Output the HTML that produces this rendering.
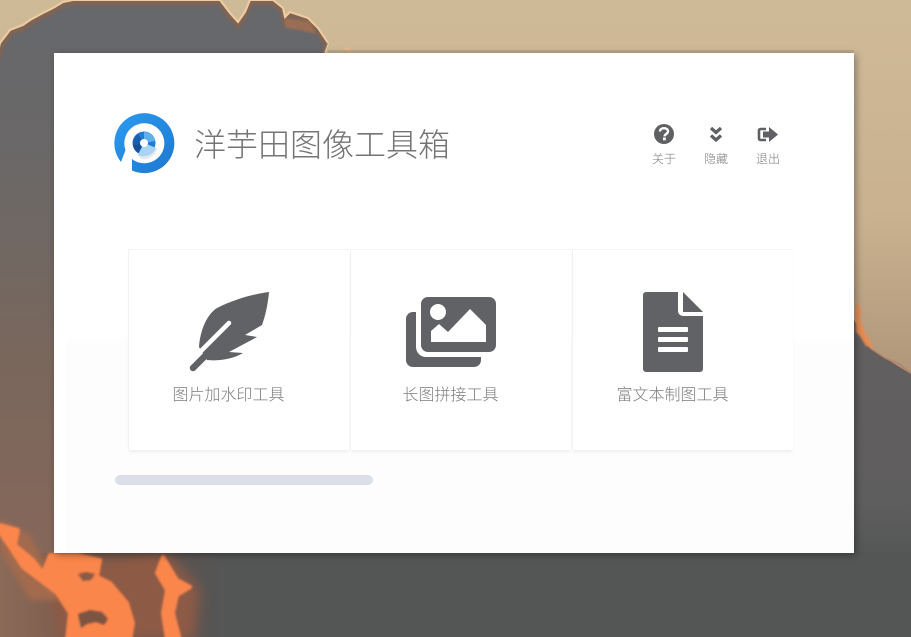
<!DOCTYPE html>
<html lang="zh"><head><meta charset="utf-8"><title>洋芋田图像工具箱</title>
<style>
html,body{margin:0;padding:0;width:911px;height:637px;overflow:hidden;background:#555856}
body{position:relative;font-family:"Liberation Sans","Noto Sans CJK SC",sans-serif}
#bg{position:absolute;left:0;top:0}
.panel{position:absolute;left:54px;top:53px;width:800px;height:500px;background:#fff;box-shadow:2px 2px 7px rgba(0,0,0,.35)}
.tex{position:absolute;left:12px;top:287px;width:788px;height:213px;background:#fcfcfd;opacity:.8}
.title{position:absolute;left:140px;top:71px;font-size:32px;line-height:42px;color:#747474;font-weight:300;white-space:nowrap}
.lbl{position:absolute;top:98px;width:52px;text-align:center;font-size:12px;line-height:16px;color:#7e7e7e;font-weight:300}
.card{position:absolute;top:196px;width:221px;height:201px;background:#fff;border-left:1px solid #f0f2f7;border-top:1px solid #f3f4f8;box-sizing:border-box;box-shadow:0 3px 3px -1px #eceef2}
.name{position:absolute;top:333px;font-size:16px;line-height:20px;color:#7c7c7c;width:241px;text-align:center;white-space:nowrap;font-weight:300}
.bar{position:absolute;left:61px;top:422px;width:258px;height:10px;border-radius:5px;background:#dcdfe7}
#ic{position:absolute;left:0;top:0}
</style></head><body>
<svg id="bg" width="911" height="637" viewBox="0 0 911 637">
<defs>
<linearGradient id="sky" x1="0" y1="0" x2="0" y2="1"><stop offset="0" stop-color="#cfba98"/><stop offset=".55" stop-color="#c9b18f"/><stop offset="1" stop-color="#ad9277"/></linearGradient>
<linearGradient id="cl" x1="0" y1="0" x2="0" y2="1"><stop offset="0" stop-color="#66686c"/><stop offset=".3" stop-color="#6b6867"/><stop offset=".65" stop-color="#7a675c"/><stop offset="1" stop-color="#86675a"/></linearGradient>
<linearGradient id="rc" x1="0" y1="0" x2="0" y2="1"><stop offset="0" stop-color="#625f60"/><stop offset=".75" stop-color="#5f5e5e"/><stop offset="1" stop-color="#545656"/></linearGradient>
<linearGradient id="bot" x1="0" y1="0" x2="1" y2="0"><stop offset="0" stop-color="#8b6a58"/><stop offset=".35" stop-color="#7a5a4c"/><stop offset=".7" stop-color="#5d5250"/><stop offset="1" stop-color="#545656"/></linearGradient>
<filter id="b1"><feGaussianBlur stdDeviation="1"/></filter>
<filter id="b3"><feGaussianBlur stdDeviation="3"/></filter>
<filter id="b6"><feGaussianBlur stdDeviation="6"/></filter>
<clipPath id="cc"><path d="M-4 60L0 43 10 30 23 25 30 20 43 13 53 8 63 2 73 0H220L230 13 238 22 245 12 250 0H273L283 8 285 17 290 12 308 18 318 28 328 43 322 60V560H-4Z"/></clipPath>
</defs>
<rect width="911" height="400" fill="url(#sky)"/>
<path d="M-4 60L0 43 10 30 23 25 30 20 43 13 53 8 63 2 73 0H220L230 13 238 22 245 12 250 0H273L283 8 285 17 290 12 308 18 318 28 328 43 322 60V560H-4Z" fill="url(#cl)" stroke="#efcb9f" stroke-width="2"/>
<g clip-path="url(#cc)"><path d="M-4 60L0 43 10 30 23 25 30 20 43 13 53 8 63 2 73 0H220L230 13 238 22 245 12 250 0H273L283 8 285 17 290 12 308 18 318 28 328 43 322 60" fill="none" stroke="#85634f" stroke-width="8" filter="url(#b1)" transform="translate(0 2)" opacity=".75"/>
<path d="M285 18L310 22 316 34 300 30 285 28Z" fill="#a8704f" filter="url(#b1)" opacity=".8"/></g>
<path d="M-4 60L0 43 10 30 23 25 30 20 43 13 53 8 63 2 73 0H220L230 13 238 22 245 12 250 0H273L283 8 285 17 290 12 308 18 318 28 328 43" fill="none" stroke="#efcb9f" stroke-width="2"/>
<path d="M342 51l3-3 3-1 3 2 3 3z" fill="#e7b88f"/>
<rect x="328" y="50" width="526" height="3" fill="#b09a80" opacity=".6"/>
<path d="M854 320L870 348 885 358 911 374V560H854Z" fill="url(#rc)"/>
<path d="M856 302l5 7-1 10 4 12 10 17-8-2-6-10-4-4v-30z" fill="#e88b50" filter="url(#b1)"/>
<path d="M870 348l15 10 14 6 12 9" fill="none" stroke="#b98068" stroke-width="1.500"/>
<rect x="54" y="553" width="857" height="84" fill="#545656"/>
<rect x="0" y="553" width="230" height="84" fill="url(#bot)"/>
<path d="M40 560H110L165 550 200 590 195 640H60Z" fill="#8d5a44" filter="url(#b6)"/>
<path d="M0 520L30 535 50 575 60 600H30L0 550Z" fill="#a36a4d" filter="url(#b3)"/>
<g filter="url(#b1)" fill="#fb864b" stroke="#fb864b" stroke-width="4" stroke-linejoin="round">
<path d="M0 525L18 530 15 545 33 560 43 573 50 555H77L100 560 97 577 110 583 127 603 133 623 130 640H67L70 613 57 593 40 580 23 567 10 547 0 533Z"/>
<path d="M163 557L177 580 190 587 177 595 173 613 180 640H167L163 613 167 590 157 573Z"/>
</g>
<path d="M78 574l8-2 9 2-4 6-8 1z" fill="#8a5a45" filter="url(#b1)"/>
<path d="M78 614l12-4 12 2 6 7-4 6-8-3-9 2-6 4z" fill="#7d5342" filter="url(#b1)"/>
</svg>
<div class="panel">
<div class="tex"></div>
<div class="title">洋芋田图像工具箱</div>
<div class="lbl" style="left:584px">关于</div>
<div class="lbl" style="left:636px">隐藏</div>
<div class="lbl" style="left:688px">退出</div>
<div class="card" style="left:74px"></div>
<div class="card" style="left:296px"></div>
<div class="card" style="left:518px"></div>
<div class="name" style="left:54px">图片加水印工具</div>
<div class="name" style="left:276px">长图拼接工具</div>
<div class="name" style="left:498px">富文本制图工具</div>
<div class="bar"></div>
</div>
<svg id="ic" width="911" height="637" viewBox="0 0 911 637">
<defs><linearGradient id="lg" x1="0" y1="0" x2="1" y2="1"><stop offset="0" stop-color="#2b9bf0"/><stop offset="1" stop-color="#1d78d0"/></linearGradient></defs>
<!-- logo -->
<path d="M121 162A30 30 0 1 1 132 170.500L132 159A20 20 0 1 0 125.500 150Z" fill="url(#lg)"/>
<path d="M133 147L157 148A13 13 0 0 1 141 159Z" fill="#e6e9ec"/>
<circle cx="144" cy="143" r="11.500" fill="#1f7fd6"/>
<path d="M144 143L156 148A13 13 0 0 1 138 155Z" fill="#a9d4f3"/>
<path d="M144 132A11 11 0 0 1 155 141L144 143Z" fill="#5db2ee"/>
<path d="M133 145A11 11 0 0 1 138 134L144 143Z" fill="#1a5fae"/>
<path d="M133 145A11 11 0 0 0 138 153L144 143Z" fill="#164f98"/>
<circle cx="144" cy="143" r="4" fill="#fff"/>
<!-- help -->
<circle cx="664" cy="134" r="10" fill="#5f6064"/>
<path d="M660 131.500c0-2 1.700-3.300 4-3.300s4 1.300 4 3.200c0 2.600-3.400 2.600-3.400 5" fill="none" stroke="#fff" stroke-width="2.400"/>
<rect x="663" y="137.500" width="2.800" height="2.800" fill="#fff"/>
<!-- chevrons -->
<path d="M711 128l5 4.500 5-4.500M711 135.500l5 4.500 5-4.500" fill="none" stroke="#5f6064" stroke-width="3.200"/>
<!-- sign out -->
<path d="M766 129h-5.500a1.500 1.500 0 0 0-1.500 1.500v8a1.500 1.500 0 0 0 1.500 1.500h5.500" fill="none" stroke="#5f6064" stroke-width="2.600"/>
<path d="M763 131.500h6v-4.500l9 7.500-9 7.500v-4.500h-6z" fill="#5f6064"/>
<!-- feather -->
<path d="M269 292C255 294 237 298 217 308 206 315 200 332 199 347L207 360C215 361 232 360 243 353L229 352 257 337 245 335 262 325C266 314 268 303 269 292Z" fill="#616266"/>
<path d="M229 323L199 353" stroke="#fff" stroke-width="4.500" stroke-linecap="round"/>
<path d="M210 351L193 368" stroke="#616266" stroke-width="6.500" stroke-linecap="round"/>
<!-- images -->
<rect x="406" y="312" width="75" height="55" rx="7" fill="#616266"/>
<rect x="416" y="292" width="85" height="65" rx="10" fill="#fff"/>
<rect x="421" y="297" width="75" height="55" rx="7" fill="#616266"/>
<circle cx="438" cy="312" r="8" fill="#fff"/>
<path d="M431 342V331L439 324 448 332 470 309 486 325V342Z" fill="#fff"/>
<!-- doc -->
<path d="M678 292H646a3 3 0 0 0-3 3V369a3 3 0 0 0 3 3H700a3 3 0 0 0 3-3V316H683a5 5 0 0 1-5-5Z" fill="#616266"/>
<path d="M683 292L703 312H683Z" fill="#616266"/>
<rect x="658" y="327" width="30" height="5" rx="1" fill="#fff"/>
<rect x="658" y="337" width="30" height="5" rx="1" fill="#fff"/>
<rect x="658" y="347" width="30" height="5" rx="1" fill="#fff"/>
</svg>
</body></html>
